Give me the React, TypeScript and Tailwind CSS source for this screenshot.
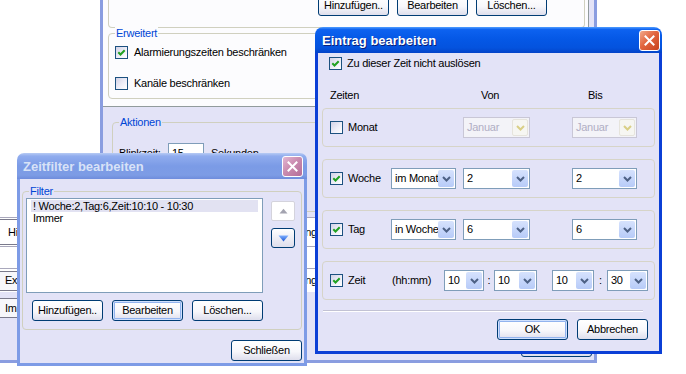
import React from "react";

function Check({ checked }: { checked?: boolean }) {
  return (
    <span className="flex h-[13px] w-[13px] shrink-0 items-center justify-center border border-[#1c5180] bg-[linear-gradient(135deg,#d2d2e6_0%,#eeeef8_55%,#ffffff_100%)]">
      {checked && (
        <svg width="11" height="11" viewBox="0 0 11 11">
          <path d="M2.3 5.3 L4.5 7.5 L8.7 3.2" fill="none" stroke="#21a121" strokeWidth="2" />
        </svg>
      )}
    </span>
  );
}

function Combo({ value, w, disabled }: { value: string; w: string; disabled?: boolean }) {
  return (
    <div
      className={`flex h-[21px] shrink-0 items-center border ${w} ${
        disabled ? "border-[#c9c7d6] bg-[#f3f3f8] text-[#b0aec4]" : "border-[#7f9db9] bg-white text-black"
      }`}
    >
      <span className="min-w-0 flex-1 overflow-hidden whitespace-nowrap pl-[3px]">{value}</span>
      <span
        className={`mr-[1px] flex h-[17px] w-[16px] shrink-0 items-center justify-center rounded-[2px] ${
          disabled
            ? "border border-[#e6e4dc] bg-[#f6f6f2]"
            : "bg-[linear-gradient(to_bottom,#d6e2fd,#b7cbf8)]"
        }`}
      >
        <svg width="9" height="6" viewBox="0 0 9 6">
          <path d="M1 1 L4.5 4.5 L8 1" fill="none" stroke={disabled ? "#d9cf86" : "#4d6185"} strokeWidth="2" />
        </svg>
      </span>
    </div>
  );
}

function Btn({ label, def }: { label: string; def?: boolean }) {
  return (
    <div
      className={`flex h-[21px] w-[71px] shrink-0 items-center justify-center rounded-[3px] border border-[#003c74] bg-[linear-gradient(to_bottom,#ffffff_0%,#f7f7fb_55%,#dedeec_100%)] ${
        def ? "shadow-[inset_0_0_0_1px_#cfe0fd,inset_0_0_0_2px_#92b3ee]" : ""
      }`}
    >
      {label}
    </div>
  );
}

function CloseX({ active }: { active?: boolean }) {
  return (
    <div
      className={`flex h-[21px] w-[21px] items-center justify-center rounded-[3px] border border-white ${
        active
          ? "bg-[linear-gradient(135deg,#f2a98b_0%,#e2663f_45%,#c7421d_100%)]"
          : "bg-[linear-gradient(135deg,#e3b7d3_0%,#ca8cb0_45%,#b56d98_100%)]"
      }`}
    >
      <svg width="11" height="11" viewBox="0 0 11 11">
        <path d="M1.5 1.5 L9.5 9.5 M9.5 1.5 L1.5 9.5" stroke="white" strokeWidth="2" strokeLinecap="square" />
      </svg>
    </div>
  );
}

function Group({
  label,
  labelBg,
  className,
  children,
}: {
  label: string;
  labelBg: string;
  className: string;
  children: React.ReactNode;
}) {
  return (
    <div className={`relative shrink-0 rounded-[4px] border border-[#d0d0bf] ${className}`}>
      <span className={`absolute left-[6px] top-[-7px] px-[1px] leading-[13px] text-[#0046d5] ${labelBg}`}>{label}</span>
      {children}
    </div>
  );
}

function MainWindow() {
  return (
    <div className="absolute left-[100px] top-[-30px] flex h-[393px] w-[497px] flex-col border-x-[3px] border-b-[3px] border-[#8a9de0] bg-[#e3e3f7]">
      <div className="flex h-[137px] w-[486px] shrink-0 flex-col border-b border-r border-[#919b9c] bg-[#fcfcfe]">
        <div className="ml-[5px] flex h-[58px] w-[477px] shrink-0 items-end rounded-b-[4px] border-x border-b border-[#d0d0bf] pb-[11px] pl-[209px]">
          <div className="flex gap-[8px]">
            <Btn label="Hinzufügen.." />
            <Btn label="Bearbeiten" />
            <Btn label="Löschen..." />
          </div>
        </div>
        <Group label="Erweitert" labelBg="bg-[#fcfcfe]" className="ml-[5px] mt-[5px] h-[66px] w-[477px] pl-[6px] pt-[12px]">
          <div className="flex items-center gap-[6px]">
            <Check checked />
            <span>Alarmierungszeiten beschränken</span>
          </div>
          <div className="mt-[18px] flex items-center gap-[6px]">
            <Check />
            <span>Kanäle beschränken</span>
          </div>
        </Group>
      </div>
      <Group label="Aktionen" labelBg="bg-[#e3e3f7]" className="ml-[9px] mt-[15px] h-[90px] w-[473px] pl-[6px] pt-[20px]">
        <div className="flex items-center">
          <span className="w-[49px]">Blinkzeit:</span>
          <div className="flex h-[20px] w-[36px] items-center border border-[#7f9db9] bg-white pl-[3px]">15</div>
          <span className="ml-[7px]">Sekunden</span>
        </div>
      </Group>
      <div className="mt-auto flex justify-end pb-[3px] pr-[2px]">
        <Btn label="Schließen" />
      </div>
    </div>
  );
}

function LeftPanel() {
  return (
    <div className="absolute left-[-10px] top-[217px] flex h-[146px] w-[330px] flex-col border-b-[3px] border-[#8a9de0] bg-[#e3e3f7]">
      <div className="flex h-[30px] shrink-0 items-center justify-between border-y border-[#a9a8bc] bg-white">
        <div className="flex h-[26px] w-[80px] items-center rounded-[2px] border border-[#7a7a8c] bg-white pl-[17px]">Hinzufügen</div>
        <span className="pr-[3px]">Einstellung</span>
      </div>
      <div className="h-[21px] shrink-0 bg-white" />
      <div className="flex h-[24px] shrink-0 items-center justify-between border-t border-[#a9a8bc] bg-white">
        <div className="flex h-[20px] w-[80px] items-center rounded-[2px] border border-[#7a7a8c] bg-[#f7f7fb] pl-[14px]">Export</div>
        <span className="pr-[3px]">Einstellung</span>
      </div>
      <div className="mt-[6px] flex h-[20px] w-[90px] shrink-0 items-center rounded-[2px] border border-[#7a7a8c] bg-[#f7f7fb] pl-[14px]">
        Import
      </div>
    </div>
  );
}

function ZeitfilterDialog() {
  return (
    <div className="absolute left-[17px] top-[153px] flex h-[213px] w-[290px] flex-col overflow-hidden rounded-t-[7px]">
      <div className="flex h-[26px] shrink-0 items-center justify-between bg-[linear-gradient(to_bottom,#b7cbf4_0%,#90acee_12%,#7b9be6_50%,#7d9ce5_85%,#6e8cdc_100%)] pl-[6px] pr-[4px]">
        <span className="text-[13px] font-bold tracking-normal text-[#d8e2f7]">Zeitfilter bearbeiten</span>
        <CloseX />
      </div>
      <div className="flex flex-1 flex-col border-x-[3px] border-b-[3px] border-[#7d9be6] bg-[#e3e3f7]">
        <Group label="Filter" labelBg="bg-[#e3e3f7]" className="ml-[2px] mt-[12px] h-[139px] w-[280px]">
          <div className="flex pl-[3px] pt-[6px]">
            <div className="h-[95px] w-[237px] border border-[#7f9db9] bg-white pt-[1px]">
              <div className="mx-[4px] bg-[#e2e2f2] px-[2px] leading-[12px]">! Woche:2,Tag:6,Zeit:10:10 - 10:30</div>
              <div className="mx-[4px] px-[2px] leading-[12px]">Immer</div>
            </div>
            <div className="ml-[8px] flex flex-col gap-[7px] pt-[3px]">
              <div className="flex h-[20px] w-[24px] items-center justify-center rounded-[2px] border border-[#d4d3dc] bg-white">
                <svg width="9" height="6" viewBox="0 0 9 6">
                  <path d="M0.5 5.5 L4.5 0.8 L8.5 5.5 Z" fill="#a3a3b0" />
                </svg>
              </div>
              <div className="flex h-[20px] w-[24px] items-center justify-center rounded-[3px] border border-[#003c74] bg-[linear-gradient(to_bottom,#ffffff,#dedeec)]">
                <svg width="11" height="7" viewBox="0 0 11 7">
                  <defs>
                    <linearGradient id="dg" x1="0" y1="0" x2="0" y2="1">
                      <stop offset="0" stopColor="#7fb0ff" />
                      <stop offset="1" stopColor="#1c54d2" />
                    </linearGradient>
                  </defs>
                  <path d="M0.5 0.5 L10.5 0.5 L5.5 6.5 Z" fill="url(#dg)" />
                </svg>
              </div>
            </div>
          </div>
          <div className="mt-[7px] flex gap-[9px] pl-[9px]">
            <Btn label="Hinzufügen.." />
            <Btn label="Bearbeiten" def />
            <Btn label="Löschen..." />
          </div>
        </Group>
        <div className="mt-[10px] flex justify-end pr-[2px]">
          <Btn label="Schließen" />
        </div>
      </div>
    </div>
  );
}

function RowBox({ children }: { children: React.ReactNode }) {
  return (
    <div className="flex h-[39px] items-center rounded-[4px] border border-[#d6d4c8] pl-[7px]">{children}</div>
  );
}

function EintragDialog() {
  return (
    <div className="absolute left-[315px] top-[27px] flex h-[327px] w-[347px] flex-col overflow-hidden rounded-t-[8px]">
      <div className="flex h-[26px] shrink-0 items-center justify-between bg-[linear-gradient(to_bottom,#4f9cff_0%,#0d62f0_10%,#0558e6_45%,#0453de_80%,#0343c8_100%)] pl-[7px] pr-[2px]">
        <span className="text-[13px] font-bold tracking-normal text-white [text-shadow:1px_1px_0_#0a1f7a]">
          Eintrag bearbeiten
        </span>
        <CloseX active />
      </div>
      <div className="flex flex-1 flex-col border-x-[3px] border-b-[3px] border-[#0b3fd6] bg-[#e3e3f7]">
        <div className="ml-[11px] mt-[4px] flex h-[13px] items-center gap-[5px]">
          <Check checked />
          <span>Zu dieser Zeit nicht auslösen</span>
        </div>
        <div className="mt-[19px] flex h-[13px] items-center pl-[12px]">
          <span className="w-[151px]">Zeiten</span>
          <span className="w-[107px]">Von</span>
          <span>Bis</span>
        </div>
        <div className="mt-[6px] flex flex-col gap-[12px] px-[4px]">
          <RowBox>
            <div className="flex w-[61px] items-center gap-[5px]">
              <Check />
              <span>Monat</span>
            </div>
            <div className="w-[72px]" />
            <div className="w-[109px]">
              <Combo value="Januar" w="w-[67px]" disabled />
            </div>
            <Combo value="Januar" w="w-[65px]" disabled />
          </RowBox>
          <RowBox>
            <div className="flex w-[61px] items-center gap-[5px]">
              <Check checked />
              <span>Woche</span>
            </div>
            <div className="w-[72px]">
              <Combo value="im Monat" w="w-[65px]" />
            </div>
            <div className="w-[109px]">
              <Combo value="2" w="w-[67px]" />
            </div>
            <Combo value="2" w="w-[65px]" />
          </RowBox>
          <RowBox>
            <div className="flex w-[61px] items-center gap-[5px]">
              <Check checked />
              <span>Tag</span>
            </div>
            <div className="w-[72px]">
              <Combo value="in Woche" w="w-[65px]" />
            </div>
            <div className="w-[109px]">
              <Combo value="6" w="w-[67px]" />
            </div>
            <Combo value="6" w="w-[65px]" />
          </RowBox>
          <RowBox>
            <div className="flex w-[61px] items-center gap-[5px]">
              <Check checked />
              <span>Zeit</span>
            </div>
            <span className="w-[53px] pl-[1px]">(hh:mm)</span>
            <Combo value="10" w="w-[40px]" />
            <span className="w-[10px] text-center">:</span>
            <Combo value="10" w="w-[43px]" />
            <div className="w-[15px]" />
            <Combo value="10" w="w-[42px]" />
            <span className="w-[13px] text-center">:</span>
            <Combo value="30" w="w-[41px]" />
          </RowBox>
        </div>
        <div className="ml-[5px] mt-[10px] h-[2px] w-[320px] border-t border-b border-t-[#c2c2d4] border-b-white" />
        <div className="mt-[7px] flex justify-end gap-[9px] pr-[11px]">
          <Btn label="OK" def />
          <Btn label="Abbrechen" />
        </div>
      </div>
    </div>
  );
}

export default function App() {
  return (
    <div className="relative h-[374px] w-[686px] overflow-hidden bg-white font-['Liberation_Sans',Arial,sans-serif] text-[11px] leading-[13px] tracking-[-0.25px] text-black">
      <MainWindow />
      <LeftPanel />
      <ZeitfilterDialog />
      <EintragDialog />
    </div>
  );
}
